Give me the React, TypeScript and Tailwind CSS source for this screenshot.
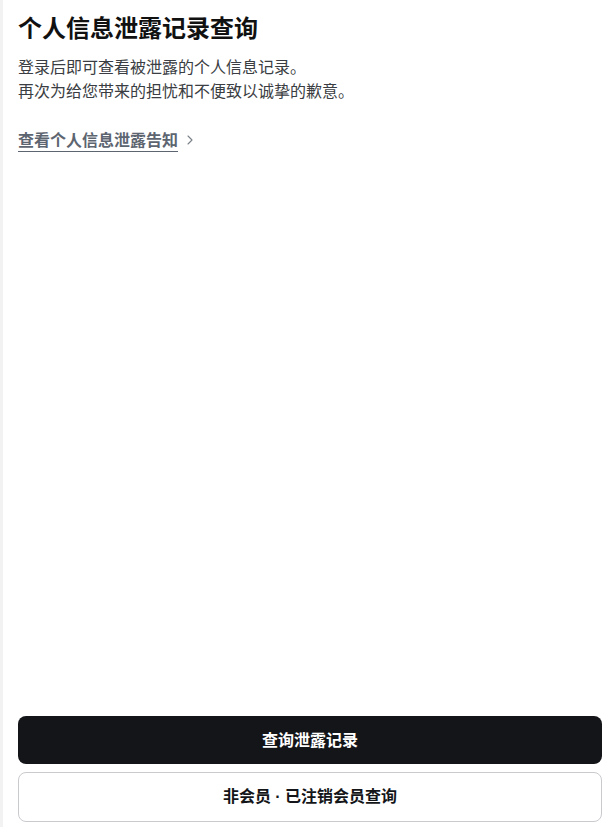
import { ChevronRight } from 'lucide-react'

const font = { fontFamily: '"Noto Sans CJK SC", "Noto Sans", sans-serif' }

export default function App() {
  return (
    <div className="flex h-[827px] w-[616px] bg-white" style={font}>
      <div className="w-[3px] shrink-0 bg-[#f2f2f3]" />
      <div className="flex flex-1 flex-col pl-[15px] pr-[14px]">
        <h1 className="mt-[11px] text-[24px] font-bold leading-[32px] text-[#111111]">个人信息泄露记录查询</h1>
        <div className="mt-[11px] text-[16px] leading-[24px] text-[#3a3d42]">
          <p>登录后即可查看被泄露的个人信息记录。</p>
          <p>再次为给您带来的担忧和不便致以诚挚的歉意。</p>
        </div>
        <a className="mt-[25px] inline-flex items-center gap-[4px] self-start text-[16px] font-bold leading-[24px] text-[#5d6570]">
          <span className="border-b border-[#5d6570]">查看个人信息泄露告知</span>
          <ChevronRight className="h-4 w-4 text-[#7a8088]" strokeWidth={1.6} />
        </a>
        <div className="flex-1" />
        <div className="flex flex-col gap-[8px] pb-[5px]">
          <button className="h-[48px] rounded-[8px] bg-[#141518] pb-[3px] text-[16px] font-bold text-white">查询泄露记录</button>
          <button className="h-[50px] rounded-[8px] border border-[#c9cacd] bg-white pb-[2px] text-[16px] font-bold text-[#141518]">
            非会员<span className="font-['Liberation_Sans',sans-serif]"> · </span>已注销会员查询
          </button>
        </div>
      </div>
    </div>
  )
}
